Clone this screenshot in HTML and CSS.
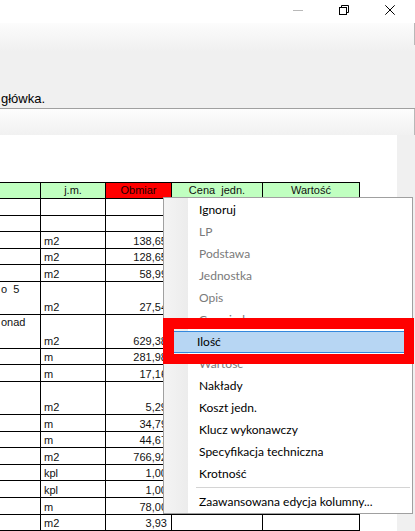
FILE: index.html
```html
<!DOCTYPE html>
<html lang="pl">
<head>
<meta charset="utf-8">
<title>Edycja kolumn</title>
<link rel="stylesheet" href="styles.css">
</head>
<body>
<div class="window">
  <div class="titlebar">
    <span class="ctl"><svg width="10" height="10" viewBox="0 0 10 10"><path d="M0 5.5H10" stroke="#b9b9b9" stroke-width="1" fill="none"/></svg></span>
    <span class="ctl"><svg width="10" height="10" viewBox="0 0 10 10"><rect x="0.5" y="2.5" width="7" height="7" stroke="#000" stroke-width="1" fill="none"/><path d="M2.5 2.5V0.5H9.5V7.5H7.5" stroke="#000" stroke-width="1" fill="none"/></svg></span>
    <span class="ctl"><svg width="10" height="10" viewBox="0 0 10 10"><path d="M0.3 0.3L9.7 9.7M9.7 0.3L0.3 9.7" stroke="#000" stroke-width="1" fill="none"/></svg></span>
  </div>
  <div class="toolbar">
    <span class="hint">główka.</span>
    <span class="vdiv"></span>
  </div>
  <div class="rule"></div>
  <div class="band"><span class="vdiv tall"></span></div>
  <div class="content">
    <div class="page">
      <div class="sheet">
        <div class="row head">
          <div class="c"></div>
          <div class="c">j.m.</div>
          <div class="c red">Obmiar</div>
          <div class="c">Cena&nbsp; jedn.</div>
          <div class="c">Wartość</div>
        </div>
        <div class="row"><div class="c"></div><div class="c"></div><div class="c num"></div><div class="c"></div><div class="c"></div></div>
        <div class="row"><div class="c"></div><div class="c"></div><div class="c num"></div><div class="c"></div><div class="c"></div></div>
        <div class="row"><div class="c"></div><div class="c">m2</div><div class="c num">138,65</div><div class="c"></div><div class="c"></div></div>
        <div class="row"><div class="c"></div><div class="c">m2</div><div class="c num">128,65</div><div class="c"></div><div class="c"></div></div>
        <div class="row"><div class="c"></div><div class="c">m2</div><div class="c num">58,99</div><div class="c"></div><div class="c"></div></div>
        <div class="row dbl"><div class="c desc"><span class="cut">o 5</span></div><div class="c">m2</div><div class="c num">27,54</div><div class="c"></div><div class="c"></div></div>
        <div class="row dbl"><div class="c desc"><span>onad</span></div><div class="c">m2</div><div class="c num">629,38</div><div class="c"></div><div class="c"></div></div>
        <div class="row"><div class="c"></div><div class="c">m</div><div class="c num">281,98</div><div class="c"></div><div class="c"></div></div>
        <div class="row"><div class="c"></div><div class="c">m</div><div class="c num">17,16</div><div class="c"></div><div class="c"></div></div>
        <div class="row dbl"><div class="c"></div><div class="c">m2</div><div class="c num">5,29</div><div class="c"></div><div class="c"></div></div>
        <div class="row"><div class="c"></div><div class="c">m</div><div class="c num">34,79</div><div class="c"></div><div class="c"></div></div>
        <div class="row"><div class="c"></div><div class="c">m</div><div class="c num">44,67</div><div class="c"></div><div class="c"></div></div>
        <div class="row"><div class="c"></div><div class="c">m2</div><div class="c num">766,92</div><div class="c"></div><div class="c"></div></div>
        <div class="row"><div class="c"></div><div class="c">kpl</div><div class="c num">1,00</div><div class="c"></div><div class="c"></div></div>
        <div class="row"><div class="c"></div><div class="c">kpl</div><div class="c num">1,00</div><div class="c"></div><div class="c"></div></div>
        <div class="row"><div class="c"></div><div class="c">m</div><div class="c num">78,00</div><div class="c"></div><div class="c"></div></div>
        <div class="row"><div class="c"></div><div class="c">m2</div><div class="c num">3,93</div><div class="c"></div><div class="c"></div></div>
        <div class="row"><div class="c"></div><div class="c"></div><div class="c num"></div><div class="c"></div><div class="c"></div></div>
      </div>
    </div>
    <div class="side"></div>
  </div>

  <div class="menu">
    <div class="item">Ignoruj</div>
    <div class="item off">LP</div>
    <div class="item off">Podstawa</div>
    <div class="item off">Jednostka</div>
    <div class="item off">Opis</div>
    <div class="item off">Cena jedn.</div>
    <div class="item hot">Ilość</div>
    <div class="item off">Wartość</div>
    <div class="item">Nakłady</div>
    <div class="item">Koszt jedn.</div>
    <div class="item">Klucz wykonawczy</div>
    <div class="item">Specyfikacja techniczna</div>
    <div class="item">Krotność</div>
    <div class="sep"></div>
    <div class="item">Zaawansowana edycja kolumny...</div>
  </div>
  <div class="mark"></div>
</div>
</body>
</html>
```

FILE: styles.css
```css
html, body {
  margin: 0;
  padding: 0;
}
body {
  width: 415px;
  height: 531px;
  overflow: hidden;
  background: #fff;
  font-family: "Liberation Sans", Arial, sans-serif;
}
.window {
  position: relative;
  width: 415px;
  height: 531px;
  overflow: hidden;
  display: flex;
  flex-direction: column;
}
.titlebar {
  height: 23px;
  flex: none;
  background: #fff;
  display: flex;
  justify-content: flex-end;
  padding-right: 2px;
}
.ctl {
  width: 46px;
  height: 23px;
  display: flex;
  justify-content: center;
  align-items: flex-start;
  padding-top: 5px;
  box-sizing: border-box;
}
.ctl svg {
  display: block;
}
.toolbar {
  height: 85px;
  flex: none;
  box-sizing: border-box;
  background: linear-gradient(to bottom, #fcfcfc 0px, #f0f0f0 28px, #f0f0f0 100%);
  display: flex;
  align-items: flex-end;
  padding: 0 0 2px 1px;
}
.hint {
  font-size: 13px;
  line-height: 15px;
  color: #000;
}
.vdiv {
  margin-left: auto;
  align-self: flex-start;
  width: 1px;
  height: 22px;
  background: #b8b8b8;
}
.vdiv.tall {
  height: 26px;
}
.rule {
  height: 1px;
  flex: none;
  background: #a0a0a0;
}
.band {
  height: 26px;
  flex: none;
  display: flex;
  background: linear-gradient(to bottom, #fdfdfd, #f1f1f1);
}
.content {
  flex: 1;
  display: flex;
  min-height: 0;
}
.page {
  width: 397px;
  flex: none;
  background: #fff;
  padding-top: 47px;
  box-sizing: border-box;
  overflow: hidden;
}
.side {
  flex: 1;
  background: #f0f0f0;
}
.sheet {
  width: 360px;
  font-size: 11px;
  color: #111;
}
.row {
  display: grid;
  grid-template-columns: 41px 65px 66px 91px 97px;
  height: 16.62px;
  box-sizing: border-box;
  border-bottom: 1px solid #000;
}
.row.dbl {
  height: 33.24px;
}
.row.head {
  height: 17px;
  border-top: 1px solid #000;
}
.c {
  border-right: 1px solid #000;
  box-sizing: border-box;
  padding: 0 3px;
  display: flex;
  align-items: flex-end;
  line-height: 13px;
  overflow: hidden;
  white-space: nowrap;
}
.head .c {
  background: #c0ffc0;
  justify-content: center;
  align-items: center;
  padding: 0;
}
.head .c.red {
  background: #ff0000;
  color: #200000;
}
.c.num {
  justify-content: flex-end;
  padding-right: 4px;
}
.c.desc {
  align-items: flex-start;
  padding-top: 1px;
  padding-left: 1px;
}
.cut {
  word-spacing: 3px;
}
.menu {
  position: absolute;
  left: 163px;
  top: 197px;
  width: 250px;
  height: 317px;
  box-sizing: border-box;
  border: 1px solid #a0a0a0;
  padding-top: 1px;
  background: linear-gradient(to right, #f4f4f4 0px, #ececec 24px, #fff 24px);
  font-family: Lato, "Noto Sans", sans-serif;
  font-size: 12px;
  color: #000;
}
.item {
  height: 22px;
  line-height: 22px;
  padding-left: 35px;
  box-sizing: border-box;
  white-space: nowrap;
}
.item.off {
  color: #7a7a7a;
}
.item.hot {
  background: #b7d6f3;
  border-top: 1px solid #3388dd;
  border-bottom: 1px solid #3388dd;
  line-height: 20px;
  padding-left: 33px;
}
.sep {
  height: 1px;
  background: #d4d4d4;
  margin: 2px 2px 3px 32px;
}
.mark {
  position: absolute;
  left: 163px;
  top: 318px;
  width: 251px;
  height: 46px;
  box-sizing: border-box;
  border-style: solid;
  border-color: #ff0000;
  border-width: 11px 10px 10px 11px;
  pointer-events: none;
}
```
